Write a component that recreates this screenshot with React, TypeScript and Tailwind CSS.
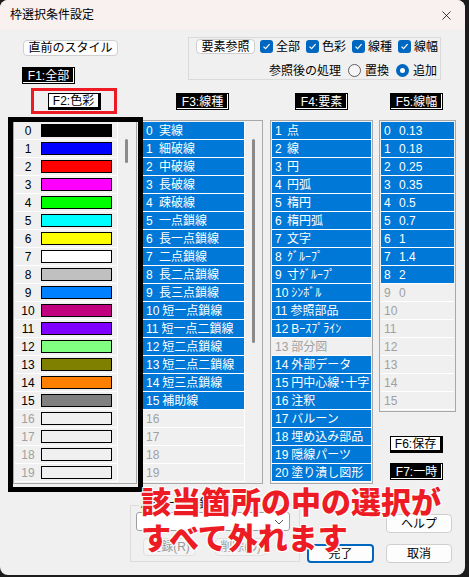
import { X } from "lucide-react";
import type { ReactNode } from "react";

const swatches = [
  "#000000", "#0000ff", "#ff0000", "#ff00ff", "#00ff00", "#00ffff", "#ffff00", "#ffffff",
  "#c0c0c0", "#0080ff", "#c0007f", "#8000ff", "#80ff80", "#808000", "#ff8000", "#808080",
];

const lineTypes = [
  "実線", "細破線", "中破線", "長破線", "疎破線", "一点鎖線", "長一点鎖線", "二点鎖線",
  "長二点鎖線", "長三点鎖線", "短一点鎖線", "短一点二鎖線", "短二点鎖線", "短二点二鎖線", "短三点鎖線", "補助線",
];

const elements: [string, boolean][] = [
  ["点", true], ["線", true], ["円", true], ["円弧", true], ["楕円", true], ["楕円弧", true],
  ["文字", true], ["ｸﾞﾙｰﾌﾟ", true], ["寸ｸﾞﾙｰﾌﾟ", true], ["ｼﾝﾎﾞﾙ", true], ["参照部品", true],
  ["Bｰｽﾌﾟﾗｲﾝ", true], ["部分図", false], ["外部データ", true], ["円中心線･十字", true],
  ["注釈", true], ["バルーン", true], ["埋め込み部品", true], ["隠線パーツ", true], ["塗り潰し図形", true],
];

const widths = ["0.13", "0.18", "0.25", "0.35", "0.5", "0.7", "1", "1.4", "2", "0", "", "", "", "", "", ""];

function Row({ on, children }: { on: boolean; children: ReactNode }) {
  return (
    <div
      className={
        on
          ? "h-[18px] flex items-center border-b border-white bg-[#0078d7] text-white whitespace-nowrap"
          : "h-[18px] flex items-center border-b border-white bg-[#f0f0f0] text-[#a0a0a0] whitespace-nowrap"
      }
    >
      {children}
    </div>
  );
}

function FKey({ dark, className = "", children }: { dark?: boolean; className?: string; children: ReactNode }) {
  return (
    <div
      className={
        dark
          ? `w-[53px] h-[17px] flex items-center justify-center bg-black text-white border border-black shadow-[inset_-1px_-1px_0_#fff] leading-none ${className}`
          : `w-[53px] h-[17px] flex items-center justify-center bg-white text-black border border-black border-r-[3px] border-b-[3px] leading-none ${className}`
      }
    >
      {children}
    </div>
  );
}

function Check({ label }: { label: string }) {
  return (
    <div className="flex items-center gap-[3px]">
      <div className="w-[13px] h-[13px] rounded-[3px] bg-[#0067c0] flex items-center justify-center">
        <svg width="9" height="9" viewBox="0 0 9 9">
          <path d="M1.5 4.6 L3.6 6.6 L7.6 2.2" fill="none" stroke="#fff" strokeWidth="1.2" />
        </svg>
      </div>
      <span>{label}</span>
    </div>
  );
}

function Radio({ on, label }: { on?: boolean; label: string }) {
  return (
    <div className="flex items-center gap-[4px]">
      {on ? (
        <div className="w-[13px] h-[13px] rounded-full bg-[#0067c0] flex items-center justify-center">
          <div className="w-[5px] h-[5px] rounded-full bg-white" />
        </div>
      ) : (
        <div className="w-[13px] h-[13px] rounded-full border border-[#5f5f5f] bg-[#f6f6f6]" />
      )}
      <span>{label}</span>
    </div>
  );
}

function WinButton({ className = "", children }: { className?: string; children: ReactNode }) {
  return (
    <div
      className={`h-[19px] flex items-center justify-center bg-[#fdfdfd] border border-[#cfcfcf] rounded-[4px] leading-none ${className}`}
    >
      {children}
    </div>
  );
}

export default function App() {
  return (
    <div className='relative w-[469px] h-[577px] bg-[#1c1c1c] overflow-hidden text-[12px] text-black font-["Liberation_Sans","Noto_Sans_CJK_JP",sans-serif]'>
      <div className="w-[465px] h-[575px] bg-[#f0f0f0] rounded-[8px] overflow-hidden flex flex-col">
        {/* title bar */}
        <div className="h-[30px] bg-[#f9f1f0] flex items-center pl-[10px] pr-[11px]">
          <span className="text-[12px]">枠選択条件設定</span>
          <X className="ml-auto" size={15} strokeWidth={1.2} />
        </div>

        {/* top controls */}
        <div className="flex mt-[7px]">
          <div className="w-[188px] flex flex-col pl-[22px]">
            <WinButton className="ml-[1px] mt-[3px] w-[95px] !h-[16px] rounded-[3px]">直前のスタイル</WinButton>
            <FKey dark className="mt-[11px]">F1:全部</FKey>
          </div>
          <div className="w-[253px] h-[43px] border border-[#dadada] flex flex-col">
            <div className="flex items-center h-[15px] mt-px pl-[7px]">
              <WinButton className="w-[59px] !h-[15px] rounded-[3px]">要素参照</WinButton>
              <div className="flex items-center gap-[6px] ml-[5px]">
                <Check label="全部" />
                <Check label="色彩" />
                <Check label="線種" />
                <Check label="線幅" />
              </div>
            </div>
            <div className="flex items-center justify-end h-[15px] mt-[9px] pr-[3px]">
              <span>参照後の処理</span>
              <div className="flex items-center gap-[7px] ml-[7px]">
                <Radio label="置換" />
                <Radio on label="追加" />
              </div>
            </div>
          </div>
        </div>

        {/* tab keys */}
        <div className="flex mt-[9px]">
          <FKey className="ml-[48px]">F2:色彩</FKey>
          <FKey dark className="ml-[75px]">F3:線種</FKey>
          <FKey dark className="ml-[66px]">F4:要素</FKey>
          <FKey dark className="ml-[42px]">F5:線幅</FKey>
        </div>

        {/* lists */}
        <div className="flex items-start mt-[10px]">
          {/* colours */}
          <div className="ml-[13px] w-[124px] border border-[#a8a8a8] p-px flex">
            <div className="w-[102px]">
              {Array.from({ length: 20 }, (_, i) => (
                <Row key={i} on={false}>
                  <span className={i < 16 ? "w-[26px] text-center text-black" : "w-[26px] text-center text-[#a0a0a0]"}>{i}</span>
                  <div
                    className="w-[71px] h-[13px] border border-black"
                    style={{ backgroundColor: i < 16 ? swatches[i] : "#f0f0f0" }}
                  />
                </Row>
              ))}
            </div>
            <div className="flex-1 border-l border-white pt-[17px] flex justify-center">
              <div className="w-[3px] h-[24px] bg-[#8a8a8a] rounded-full" />
            </div>
          </div>

          {/* line types */}
          <div className="ml-[4px] w-[122px] border border-[#a8a8a8] p-px flex">
            <div className="w-[101px]">
              {Array.from({ length: 20 }, (_, i) => (
                <Row key={i} on={i < 16}>
                  <span className="pl-[3px] pr-[3px] min-w-[16px]">{i}</span>
                  <span>{lineTypes[i] ?? ""}</span>
                </Row>
              ))}
            </div>
            <div className="flex-1 border-l border-white pt-[17px] flex justify-center">
              <div className="w-[3px] h-[204px] bg-[#8a8a8a] rounded-full" />
            </div>
          </div>

          {/* elements */}
          <div className="ml-[7px] w-[103px] border border-[#a8a8a8] p-px">
            {elements.map(([name, on], i) => (
              <Row key={i} on={on}>
                <span className="pl-[3px] pr-[3px] min-w-[15px]">{i + 1}</span>
                <span>{name}</span>
              </Row>
            ))}
          </div>

          {/* widths + save keys */}
          <div className="ml-[6px] flex flex-col">
            <div className="w-[77px] border border-[#a8a8a8] p-px">
              {widths.map((w, i) => (
                <Row key={i} on={i < 9}>
                  <span className="pl-[3px] min-w-[18px]">{i}</span>
                  <span>{w}</span>
                </Row>
              ))}
            </div>
            <FKey className="ml-[11px] mt-[24px]">F6:保存</FKey>
            <FKey dark className="ml-[11px] mt-[10px]">F7:一時</FKey>
          </div>
        </div>

        {/* bottom */}
        <div className="flex items-start">
          <div className="ml-[130px] mt-[21px] w-[170px] h-[57px] border border-[#dcdcdc] relative flex flex-col">
            <span className="absolute -top-[8px] left-[8px] bg-[#f0f0f0] px-px leading-none">パターン登録</span>
            <div className="mt-[6px] ml-[5px] w-[154px] h-[19px] bg-white border border-[#a0a0a0] rounded-[3px] flex items-center justify-end pr-[5px]">
              <svg width="10" height="6" viewBox="0 0 10 6">
                <path d="M1 1 L5 5 L9 1" fill="none" stroke="#555" strokeWidth="1" />
              </svg>
            </div>
            <div className="flex mt-[7px] ml-[12px] gap-[19px] text-[#9a9a9a]">
              <WinButton className="w-[53px] !h-[18px] !bg-[#f4f4f4] !border-[#e0e0e0]">登録(R)</WinButton>
              <WinButton className="w-[51px] !h-[18px] !bg-[#f4f4f4] !border-[#e0e0e0]">削除(D)</WinButton>
            </div>
          </div>
          <div className="ml-[7px] flex flex-col">
            <div className="flex justify-end mt-[30px]">
              <WinButton className="w-[66px]">ヘルプ</WinButton>
            </div>
            <div className="flex mt-[11px] gap-[12px]">
              <WinButton className="w-[67px] !border-[#0067c0] !border-2">完了</WinButton>
              <WinButton className="w-[66px]">取消</WinButton>
            </div>
          </div>
        </div>
      </div>

      {/* annotations */}
      <div className="absolute left-[31px] top-[88px] w-[86px] h-[26px] border-[3px] border-[#ed1c24]" />
      <div className="absolute left-[8px] top-[117px] w-[135px] h-[375px] border-[5px] border-black" />
      <div className="absolute left-[141px] top-[485px] text-[30px] leading-[36px] font-black text-[#ed1c24] whitespace-nowrap [text-shadow:1px_1px_0_#fff,-1px_-1px_0_#fff,1px_-1px_0_#fff,-1px_1px_0_#fff]">
        <div>該当箇所の中の選択が</div>
        <div>すべて外れます</div>
      </div>
    </div>
  );
}
